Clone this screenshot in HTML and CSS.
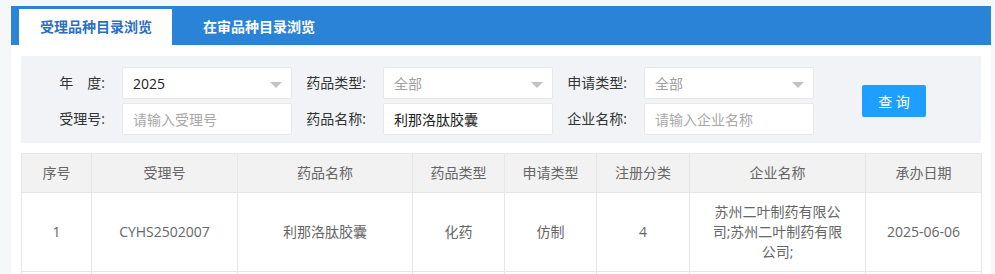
FILE: index.html
```html
<!DOCTYPE html>
<html>
  <head>
    <meta charset="utf-8">
    <link rel="stylesheet" href="styles.css">
  </head>
  <body>
    <div class="card">
      <ul class="tabBar">
        <li class="tab active">受理品种目录浏览</li>
        <li class="tab">在审品种目录浏览</li>
      </ul>
      <div class="cardBody">
        <div class="filterPanel">
          <div class="filterGrid">
            <label class="fieldLabel">年　度:</label>
            <div class="field select"><span class="value">2025</span><i class="arrow"></i></div>
            <label class="fieldLabel">药品类型:</label>
            <div class="field select"><span class="muted">全部</span><i class="arrow"></i></div>
            <label class="fieldLabel">申请类型:</label>
            <div class="field select"><span class="muted">全部</span><i class="arrow"></i></div>

            <label class="fieldLabel">受理号:</label>
            <input class="field" type="text" placeholder="请输入受理号">
            <label class="fieldLabel">药品名称:</label>
            <input class="field" type="text" value="利那洛肽胶囊">
            <label class="fieldLabel">企业名称:</label>
            <input class="field" type="text" placeholder="请输入企业名称">
          </div>
          <button class="searchBtn">查 询</button>
        </div>

        <table class="resultTable">
          <colgroup>
            <col style="width:70px">
            <col style="width:146px">
            <col style="width:175px">
            <col style="width:92px">
            <col style="width:92px">
            <col style="width:93px">
            <col style="width:176px">
            <col style="width:116px">
          </colgroup>
          <thead>
            <tr>
              <th>序号</th>
              <th>受理号</th>
              <th>药品名称</th>
              <th>药品类型</th>
              <th>申请类型</th>
              <th>注册分类</th>
              <th>企业名称</th>
              <th>承办日期</th>
            </tr>
          </thead>
          <tbody>
            <tr>
              <td>1</td>
              <td>CYHS2502007</td>
              <td>利那洛肽胶囊</td>
              <td>化药</td>
              <td>仿制</td>
              <td>4</td>
              <td class="company">苏州二叶制药有限公司;苏州二叶制药有限公司;</td>
              <td>2025-06-06</td>
            </tr>
            <tr>
              <td>&nbsp;</td><td></td><td></td><td></td><td></td><td></td><td></td><td></td>
            </tr>
          </tbody>
        </table>
      </div>
    </div>
  </body>
</html>
```

FILE: styles.css
```css
body{
  margin: 6px 4px 0 11px;
  background-color: #f6f7f9;
  font-family: "Open Sans", "Noto Sans CJK SC", sans-serif;
  font-size: 14px;
  color: #333;
  overflow: hidden;
}
.card{
  background-color: #fff;
  box-shadow: 0 0 2px rgba(0,0,0,0.08);
}
.tabBar{
  display: flex;
  gap: 10px;
  margin: 0;
  padding: 3px 0 0 8px;
  list-style: none;
  background-color: #2b83d8;
}
.tab{
  padding: 0 20px 0 21px;
  height: 36px;
  line-height: 36px;
  color: #fff;
  font-weight: bold;
}
.tab.active{
  background-color: #fff;
  color: #2a6fc2;
}
.cardBody{
  padding: 11px 10px 0 10px;
}
.filterPanel{
  display: flex;
  align-items: center;
  background-color: #f1f3f6;
  padding: 11px 10px 8px 10px;
}
.filterGrid{
  display: grid;
  grid-template-columns: repeat(3, 91px 170px);
  row-gap: 4px;
  align-items: center;
}
.fieldLabel{
  text-align: right;
  padding-right: 17px;
  color: #333;
  line-height: 20px;
}
.field{
  box-sizing: border-box;
  height: 32px;
  width: 170px;
  border: 1px solid #e8e8e8;
  border-radius: 2px;
  background-color: #fff;
  padding: 0 10px;
  font-family: inherit;
  font-size: 14px;
  color: #222;
  outline: none;
}
.field::placeholder{
  color: #a8a8a8;
}
.select{
  position: relative;
  display: flex;
  align-items: center;
}
.select .value{
  color: #222;
}
.select .muted{
  color: #a0a0a0;
}
.arrow{
  position: absolute;
  right: 9px;
  top: 14px;
  width: 0;
  height: 0;
  border-top: 6px solid #c2c2c2;
  border-left: 6px solid transparent;
  border-right: 6px solid transparent;
}
.searchBtn{
  margin-left: 48px;
  width: 64px;
  height: 32px;
  border: none;
  border-radius: 2px;
  background-color: #1e9fff;
  color: #fff;
  font-family: inherit;
  font-size: 14px;
  padding: 0;
}
.resultTable{
  margin-top: 10px;
  width: 960px;
  border-collapse: collapse;
  table-layout: fixed;
  color: #666;
}
.resultTable th,
.resultTable td{
  border: 1px solid #e6e6e6;
  padding: 9px 15px;
  line-height: 20px;
  text-align: center;
  font-weight: normal;
}
.resultTable th{
  background-color: #f2f2f2;
}
.resultTable td.company{
  padding: 9px 20px;
}
```
